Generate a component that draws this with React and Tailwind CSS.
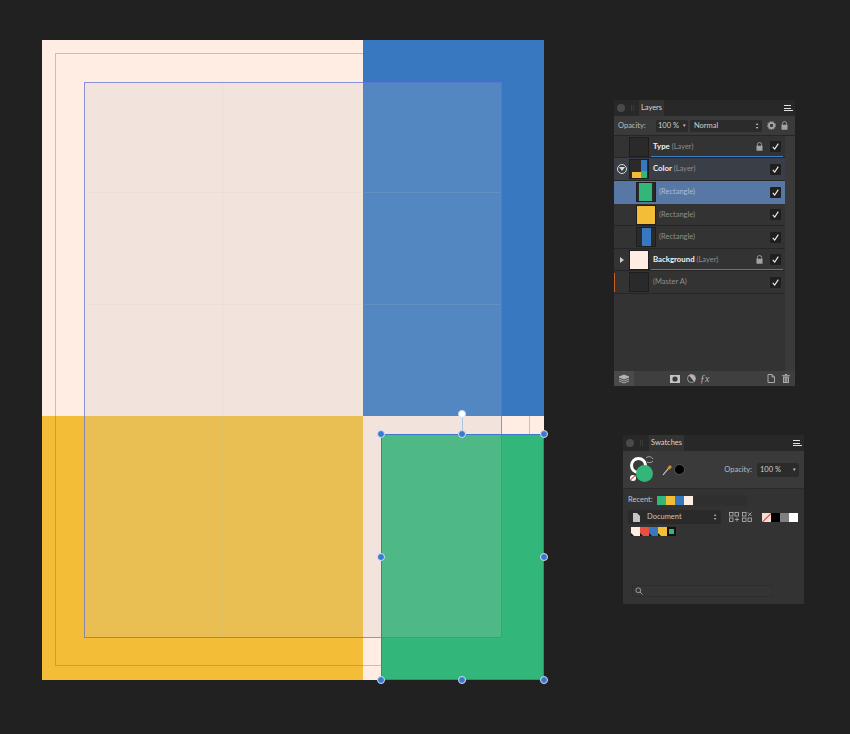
import React from "react";

const font = { fontFamily: '"Lato", "Liberation Sans", sans-serif' };

function Check() {
  return (
    <div className="flex h-[11px] w-[11px] items-center justify-center rounded-[1px] bg-[#1f1f1f]">
      <svg width="9" height="9" viewBox="0 0 9 9" fill="none">
        <path d="M1.8 4.8 L3.7 7 L7.3 1.6" stroke="#f2f2f2" strokeWidth="1.1" />
      </svg>
    </div>
  );
}

function Lock() {
  return (
    <svg width="7" height="9" viewBox="0 0 7 9">
      <path d="M1.4 4 V2.6 A2.1 2.1 0 0 1 5.6 2.6 V4" fill="none" stroke="#a3a3a3" strokeWidth="0.9" />
      <rect x="0.5" y="3.8" width="6" height="5" rx="0.5" fill="#a3a3a3" />
    </svg>
  );
}

function Row({ left, indent, thumb, name, kind, lock, selected, tinted, underline, h, bold }) {
  const tone = selected
    ? "bg-[#5778a5] border-[#5778a5]"
    : tinted
      ? "bg-[#3a3f47] border-[#262626]"
      : "bg-[#333333] border-[#262626]";
  return (
    <div className={`relative flex shrink-0 items-center border-b ${tone}`} style={{ height: h }}>
      <div className="flex h-full w-[15px] shrink-0 items-center justify-center">{left}</div>
      <div className={indent ? "ml-[7px]" : ""}>{thumb}</div>
      <div className={`flex-1 text-[7.5px] leading-none ${indent ? "ml-[3px]" : "ml-[4px]"}`}>
        {bold ? <span className="text-[7.8px] font-bold text-[#f0f0f0]">{name} </span> : null}
        <span className={selected ? "text-[#a9bdd8]" : "text-[#8e8e8e]"}>{kind}</span>
      </div>
      {lock ? <div className="mr-[7px] flex"><Lock /></div> : null}
      <div className="mr-[4px] flex"><Check /></div>
      {underline ? <div className="absolute bottom-0 left-[37px] right-[2px] z-10 h-px bg-[#3f7fc6]" /> : null}
    </div>
  );
}

function Thumb({ children, w = 20 }) {
  return (
    <div className="relative h-[20px] overflow-hidden border border-[#1e1e1e] bg-[#2a2a2a]" style={{ width: w }}>
      {children}
    </div>
  );
}

function Handle({ x, y, light }) {
  return (
    <div
      className={`absolute h-[8px] w-[8px] -translate-x-1/2 -translate-y-1/2 rounded-full border border-[#cfe0f5] ${light ? "bg-white" : "bg-[#3d78cc]"}`}
      style={{ left: x, top: y }}
    />
  );
}

function Menu() {
  return (
    <div className="mr-[2px] flex h-[6px] w-[9px] flex-col justify-between">
      <div className="h-px w-[7px] bg-[#e0e0e0]" />
      <div className="h-px w-[7px] bg-[#e0e0e0]" />
      <div className="h-px w-[9px] bg-[#e0e0e0]" />
    </div>
  );
}

function Layers() {
  return (
    <div className="absolute left-[614px] top-[100px] flex h-[286px] w-[181px] flex-col bg-[#333333]" style={font}>
      <div className="flex h-[16px] shrink-0 items-center bg-[#282828]">
        <div className="ml-[3px] h-[8px] w-[8px] rounded-full bg-[#4a4a4a]" />
        <div className="ml-[6px] h-[6px] w-[3px] border-x border-[#3a3a3a]" />
        <div className="ml-[5px] flex h-full w-[25px] items-center justify-center bg-[#333333] text-[7.5px] text-[#d6d6d6]">Layers</div>
        <div className="flex-1" />
        <Menu />
      </div>
      <div className="flex h-[20px] shrink-0 items-center border-b border-[#262626] bg-[#3a3a3a]">
        <div className="ml-[4px] w-[38px] text-[7.5px] text-[#bdbdbd]">Opacity:</div>
        <div className="flex h-[12px] w-[32px] items-center justify-between rounded-[2px] bg-[#2b2b2b] px-[2px] text-[7.5px] text-[#cfcfcf]">
          <span>100 %</span><span className="text-[5px]">▾</span>
        </div>
        <div className="ml-[2px] flex h-[12px] w-[72px] items-center justify-between rounded-[2px] bg-[#2b2b2b] px-[4px] text-[7.5px] text-[#cfcfcf]">
          <span>Normal</span>
          <span className="flex flex-col text-[4px] leading-[4px]"><span>▴</span><span>▾</span></span>
        </div>
        <svg className="ml-[5px]" width="9" height="9" viewBox="0 0 9 9">
          <circle cx="4.5" cy="4.5" r="2.6" fill="none" stroke="#a8a8a8" strokeWidth="1.8" />
          <circle cx="4.5" cy="4.5" r="4" fill="none" stroke="#a8a8a8" strokeWidth="1" strokeDasharray="1.4 1.4" />
        </svg>
        <div className="ml-[5px] flex"><Lock /></div>
      </div>
      <div className="relative flex flex-1 flex-col pr-[10px]">
        <Row h={22} bold name="Type" kind="(Layer)" lock left={null} underline thumb={<Thumb />} />
        <Row
          h={23}
          bold
          tinted
          name="Color"
          kind="(Layer)"
          left={
            <div className="flex h-[10px] w-[10px] items-center justify-center rounded-full border border-[#dcdcdc]">
              <div className="h-0 w-0 border-x-[3px] border-t-[4px] border-x-transparent border-t-[#dcdcdc]" />
            </div>
          }
          thumb={
            <Thumb>
              <div className="absolute left-[11px] top-0 h-[18px] w-[6px] bg-[#3878c0]" />
              <div className="absolute left-[11px] top-[11px] h-[7px] w-[6px] bg-[#33b679]" />
              <div className="absolute left-[2px] top-[12px] h-[6px] w-[9px] bg-[#f4bd38]" />
            </Thumb>
          }
        />
        <Row h={23} selected indent kind="(Rectangle)" left={null}
          thumb={<Thumb><div className="absolute left-[2px] top-0 h-[18px] w-[13px] bg-[#33b679]" /></Thumb>} />
        <Row h={22} indent kind="(Rectangle)" left={null}
          thumb={<Thumb><div className="absolute inset-0 bg-[#f4bd38]" /></Thumb>} />
        <Row h={23} indent kind="(Rectangle)" left={null}
          thumb={<Thumb><div className="absolute left-[5px] top-0 h-[18px] w-[9px] bg-[#3878c0]" /></Thumb>} />
        <Row h={22} bold name="Background" kind="(Layer)" lock underline
          left={<div className="h-0 w-0 border-y-[3px] border-l-[4px] border-y-transparent border-l-[#cfcfcf]" />}
          thumb={<Thumb><div className="absolute inset-0 bg-[#ffede4]" /></Thumb>} />
        <Row h={23} kind="(Master A)" left={<div className="mr-auto h-[19px] w-px bg-[#c8601a]" />} thumb={<Thumb />} />
        <div className="absolute bottom-0 right-0 top-0 w-[10px] bg-[#3a3a3a]" />
      </div>
      <div className="flex h-[15px] shrink-0 items-center bg-[#3f3f3f]">
        <div className="flex h-full w-[20px] items-center justify-center bg-[#4a4a4a]">
          <svg width="12" height="10" viewBox="0 0 12 10" fill="none" stroke="#b5b5b5" strokeWidth="0.9">
            <path d="M1 3 L6 1 L11 3 L6 5 Z" fill="#b5b5b5" />
            <path d="M1 5 L6 7 L11 5" />
            <path d="M1 7 L6 9 L11 7" />
          </svg>
        </div>
        <svg className="ml-[36px]" width="10" height="8" viewBox="0 0 10 8">
          <rect width="10" height="8" fill="#c4c4c4" />
          <circle cx="5" cy="4" r="2.6" fill="#3a3a3a" />
        </svg>
        <svg className="ml-[7px]" width="9" height="9" viewBox="0 0 9 9">
          <circle cx="4.5" cy="4.5" r="4" fill="#3a3a3a" stroke="#b5b5b5" strokeWidth="0.8" />
          <path d="M2 1.4 A4 4 0 0 1 7 7.6 Z" fill="#b5b5b5" />
        </svg>
        <span className="ml-[4px] text-[10px] italic leading-none text-[#b5b5b5]" style={{ fontFamily: '"Liberation Serif", serif' }}>ƒx</span>
        <div className="flex-1" />
        <svg width="8" height="9" viewBox="0 0 8 9" fill="none" stroke="#b5b5b5" strokeWidth="0.9">
          <path d="M1 .5 H5 L7.5 3 V8.5 H1 Z M5 .5 V3 H7.5" />
        </svg>
        <svg className="ml-[7px] mr-[5px]" width="8" height="9" viewBox="0 0 8 9" fill="#a8a8a8">
          <rect x="0" y="1.2" width="8" height="1" />
          <rect x="2.8" y="0" width="2.4" height="1" />
          <path d="M1 2.6 H7 V9 H1 Z M2.4 3.4 V8 H3.2 V3.4 Z M4.8 3.4 V8 H5.6 V3.4 Z" fillRule="evenodd" />
        </svg>
      </div>
    </div>
  );
}

function Chip({ c }) {
  return (
    <div className="relative h-[9px] w-[9px]" style={{ backgroundColor: c }}>
      <svg className="absolute bottom-0 left-0" width="3" height="3" viewBox="0 0 3 3">
        <path d="M0 0 L3 3 H0 Z" fill="#111111" />
      </svg>
    </div>
  );
}

function Swatches() {
  return (
    <div className="absolute left-[623px] top-[435px] flex h-[169px] w-[181px] flex-col bg-[#333333]" style={font}>
      <div className="flex h-[16px] shrink-0 items-center bg-[#282828]">
        <div className="ml-[3px] h-[8px] w-[8px] rounded-full bg-[#4a4a4a]" />
        <div className="ml-[6px] h-[6px] w-[3px] border-x border-[#3a3a3a]" />
        <div className="ml-[6px] flex h-full w-[35px] items-center justify-center bg-[#333333] text-[7.5px] text-[#d6d6d6]">Swatches</div>
        <div className="flex-1" />
        <Menu />
      </div>
      <div className="flex h-[38px] shrink-0 items-center border-b border-[#2b2b2b] bg-[#3a3a3a]">
        <div className="relative ml-[6px] h-[28px] w-[28px]">
          <div className="absolute left-[1px] top-[1px] h-[17px] w-[17px] rounded-full border-[3px] border-white" />
          <div className="absolute left-[7px] top-[9px] h-[17px] w-[17px] rounded-full bg-[#33b679]" />
          <div className="absolute left-[1px] top-[19px] h-[6px] w-[6px] rounded-full bg-white" />
          <div className="absolute left-[1px] top-[21.5px] h-px w-[6px] -rotate-45 bg-[#d9443c]" />
          <svg className="absolute left-[16px] top-0" width="9" height="8" viewBox="0 0 9 8" fill="none" stroke="#bdbdbd" strokeWidth="0.8">
            <path d="M1 2 C3 0 6 0 8 3 M8 5 C6 7 4 7 2 6" />
          </svg>
        </div>
        <svg className="ml-[5px]" width="11" height="12" viewBox="0 0 11 12" fill="none">
          <path d="M1 11 L6 5" stroke="#d9d9d9" strokeWidth="1.1" />
          <path d="M5 4 L8 1 L10 3 L7 6 Z" fill="#c98f2f" />
        </svg>
        <div className="ml-[1px] h-[11px] w-[11px] rounded-full border border-[#555555] bg-black" />
        <div className="flex-1" />
        <div className="mr-[5px] text-[7.5px] text-[#bdbdbd]">Opacity:</div>
        <div className="mr-[5px] flex h-[14px] w-[42px] items-center justify-between rounded-[2px] bg-[#2b2b2b] px-[3px] text-[7.5px] text-[#cfcfcf]">
          <span>100 %</span><span className="text-[5px]">▾</span>
        </div>
      </div>
      <div className="relative flex flex-1 flex-col px-[5px]">
        <div className="mt-[5px] flex h-[12px] items-center">
          <span className="w-[29px] text-[7.5px] text-[#c4c4c4]">Recent:</span>
          <div className="h-[9px] w-[9px] bg-[#33b679]" />
          <div className="h-[9px] w-[9px] bg-[#f4bd38]" />
          <div className="h-[9px] w-[9px] bg-[#3878c0]" />
          <div className="h-[9px] w-[9px] bg-[#ffede4]" />
          <div className="ml-[1px] h-[11px] w-[53px] bg-[#2f2f2f]" />
        </div>
        <div className="mt-[4px] flex h-[14px] items-center">
          <div className="flex h-[14px] w-[93px] items-center rounded-[2px] bg-[#2a2a2a] px-[5px] text-[7.5px] text-[#c4c4c4]">
            <svg width="7" height="9" viewBox="0 0 7 9"><path d="M0 0 H4 L7 3 V9 H0 Z" fill="#c4c4c4" /></svg>
            <span className="ml-[7px] flex-1">Document</span>
            <span className="flex flex-col text-[4px] leading-[4px]"><span>▴</span><span>▾</span></span>
          </div>
          <svg className="ml-[8px]" width="10" height="10" viewBox="0 0 10 10" fill="none" stroke="#b5b5b5" strokeWidth="0.8">
            <rect x=".5" y=".5" width="3.5" height="3.5" /><rect x="6" y=".5" width="3.5" height="3.5" /><rect x=".5" y="6" width="3.5" height="3.5" /><path d="M8 5.5 V9.5 M6 7.5 H10" />
          </svg>
          <svg className="ml-[3px]" width="10" height="10" viewBox="0 0 10 10" fill="none" stroke="#b5b5b5" strokeWidth="0.8">
            <rect x=".5" y=".5" width="3.5" height="3.5" /><path d="M6 .5 L9.5 4 M9.5 .5 L6 4" /><rect x=".5" y="6" width="3.5" height="3.5" /><rect x="6" y="6" width="3.5" height="3.5" />
          </svg>
          <div className="relative ml-[10px] h-[9px] w-[9px] overflow-hidden bg-[#f7dcd6]">
            <div className="absolute left-[-2px] top-[4px] h-px w-[14px] -rotate-45 bg-[#d9443c]" />
          </div>
          <div className="h-[9px] w-[9px] bg-black" />
          <div className="h-[9px] w-[9px] bg-[#808080]" />
          <div className="h-[9px] w-[9px] bg-white" />
        </div>
        <div className="mt-[3px] flex items-center pl-[3px]">
          <Chip c="#ffede4" /><Chip c="#e8503f" /><Chip c="#3878c0" /><Chip c="#f4bd38" />
          <div className="h-[9px] w-[9px] border-2 border-[#111111] bg-[#33b679]" />
        </div>
        <div className="flex-1" />
        <div className="mb-[7px] ml-[4px] flex h-[12px] w-[141px] items-center rounded-[2px] border border-[#2e2e2e] bg-[#343434] pl-[2px]">
          <svg width="8" height="8" viewBox="0 0 8 8" fill="none" stroke="#a8a8a8" strokeWidth="0.9">
            <circle cx="3.3" cy="3.3" r="2.4" /><path d="M5 5 L7.5 7.5" />
          </svg>
        </div>
      </div>
    </div>
  );
}

function Page() {
  return (
    <div className="absolute left-[42px] top-[40px] h-[640px] w-[502px] bg-[#ffede4]">
      <div className="absolute left-[321px] top-0 h-[376px] w-[181px] bg-[#3778c1]" />
      <div className="absolute left-0 top-[376px] h-[264px] w-[321px] bg-[#f4bd38]" />
      {/* margin guides */}
      <div className="absolute left-[13px] top-[13px] h-[613px] w-[475px] border border-[#6f6460]/35" />
      <div className="absolute left-[339px] top-[394px] h-[246px] w-[163px] bg-[#33b679]" />
      {/* inner text frame */}
      <div className="absolute left-[42px] top-[42px] h-[556px] w-[418px] border border-[#5a6fd8]/70 bg-[#bfc3c1]/20">
        <div className="absolute bottom-0 left-[137px] top-0 w-px bg-[#bfc3c1]/15" />
        <div className="absolute left-0 right-0 top-[109px] h-px bg-[#bfc3c1]/15" />
        <div className="absolute left-0 right-0 top-[221px] h-px bg-[#bfc3c1]/15" />
      </div>
    </div>
  );
}

export default function App() {
  return (
    <div className="relative h-[734px] w-[850px] overflow-hidden bg-[#212121]">
      <Page />
      {/* selection */}
      <div className="absolute left-[381px] top-[434px] h-[246px] w-[163px] border border-[#3d78cc]" />
      <div className="absolute left-[462px] top-[414px] h-[20px] w-px bg-[#a9c4e6]" />
      <Handle x={462} y={414} light />
      <Handle x={381} y={434} />
      <Handle x={462} y={434} />
      <Handle x={544} y={434} />
      <Handle x={381} y={557} />
      <Handle x={544} y={557} />
      <Handle x={381} y={680} />
      <Handle x={462} y={680} />
      <Handle x={544} y={680} />
      <Layers />
      <Swatches />
    </div>
  );
}
